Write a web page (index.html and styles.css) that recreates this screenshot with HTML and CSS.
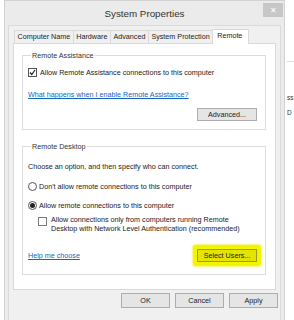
FILE: index.html
```html
<!DOCTYPE html>
<html>
<head>
<meta charset="utf-8">
<link rel="stylesheet" href="styles.css">
</head>
<body>
<div class="window">
  <div class="titlebar">
    <span></span>
    <span class="title">System Properties</span>
    <span class="close-wrap"><span class="close">&#x2715;</span></span>
  </div>
  <div class="client">
    <div class="tabs">
      <span class="tab">Computer Name</span>
      <span class="tab">Hardware</span>
      <span class="tab">Advanced</span>
      <span class="tab">System Protection</span>
      <span class="tab active">Remote</span>
    </div>
    <div class="panel">
      <fieldset class="group g1">
        <legend>Remote Assistance</legend>
        <div class="row check-row">
          <span class="checkbox checked"><svg width="7" height="7" viewBox="0 0 7 7"><path d="M1 3.5 L2.8 5.5 L6 1" fill="none" stroke="#222" stroke-width="1.2"/></svg></span>
          <span>Allow Remote Assistance connections to this computer</span>
        </div>
        <a class="link l1">What happens when I enable Remote Assistance?</a>
        <div class="btn-row"><span class="btn">Advanced...</span></div>
      </fieldset>
      <fieldset class="group g2">
        <legend>Remote Desktop</legend>
        <div class="text choose">Choose an option, and then specify who can connect.</div>
        <div class="row radio-row r1"><span class="radio"></span><span>Don't allow remote connections to this computer</span></div>
        <div class="row radio-row r2"><span class="radio on"></span><span>Allow remote connections to this computer</span></div>
        <div class="row nla"><span class="checkbox"></span><span>Allow connections only from computers running Remote Desktop with Network Level Authentication (recommended)</span></div>
        <div class="bottom-row">
          <a class="link">Help me choose</a>
          <span class="hl"><span class="btn select">Select Users...</span></span>
        </div>
      </fieldset>
    </div>
    <div class="buttons">
      <span class="btn big">OK</span>
      <span class="btn big">Cancel</span>
      <span class="btn big">Apply</span>
    </div>
  </div>
</div>
<div class="behind">
  <div class="bline"></div>
  <div class="btxt t1">ss</div>
  <div class="btxt t2">D</div>
</div>
</body>
</html>
```

FILE: styles.css
```css
html, body {
  margin: 0;
  padding: 0;
  background: #ffffff;
  height: 320px;
  overflow: hidden;
}
body {
  display: flex;
  font-family: "Liberation Sans", Arial, sans-serif;
  font-size: 7.2px;
  color: #1a1a1a;
}
.window {
  margin-left: 4px;
  width: 273px;
  height: 330px;
  background: #ebebeb;
  border: 1px solid #d2d2d2;
  padding: 0 3px;
  flex: none;
}
.titlebar {
  height: 24px;
  display: grid;
  grid-template-columns: 1fr auto 1fr;
  align-items: start;
}
.title {
  font-size: 9.8px;
  color: #333;
  padding-top: 7px;
}
.close-wrap {
  display: flex;
  justify-content: flex-end;
  padding-top: 2px;
  margin-right: -2px;
}
.close {
  width: 20px;
  height: 14px;
  background: #c7c7c7;
  color: #fff;
  font-size: 8px;
  display: flex;
  align-items: center;
  justify-content: center;
}
.client {
  background: #f0f0f0;
  border: 1px solid #dadada;
  padding: 3px 4px 0 4px;
  height: 300px;
}
.tabs {
  display: flex;
  align-items: flex-end;
  height: 14px;
  padding-left: 1px;
  position: relative;
  z-index: 1;
}
.tab {
  height: 12px;
  line-height: 12px;
  border: 1px solid #d9d9d9;
  border-bottom: none;
  border-right: none;
  background: #f0f0f0;
  padding: 0 2.5px;
  font-size: 7.2px;
  color: #222;
}
.tab.active {
  height: 14px;
  line-height: 12px;
  background: #ffffff;
  border-right: 1px solid #d9d9d9;
  padding: 0 6px 0 4px;
  margin-bottom: -1px;
}
.panel {
  background: #ffffff;
  border: 1px solid #d9d9d9;
  padding: 7px 9px 0 8px;
  box-sizing: border-box;
  height: 247px;
}
.group {
  margin: 0;
  border: 1px solid #dcdcdc;
  padding: 0 8px 0 5px;
  min-width: 0;
}
.group legend {
  padding: 0 1px;
  margin-left: 3px;
  font-size: 7.2px;
  color: #333;
  line-height: 9px;
}
.g1 { height: 79px; box-sizing: border-box; }
.g2 { margin-top: 12px; height: 133px; box-sizing: border-box; }
.row {
  display: flex;
  align-items: center;
  font-size: 7.2px;
  line-height: 9px;
}
.check-row { margin-top: 8px; gap: 3px; }
.checkbox {
  width: 8px;
  height: 8px;
  border: 1px solid #7a7a7a;
  background: #fff;
  box-sizing: border-box;
  display: flex;
  align-items: center;
  justify-content: center;
  flex: none;
}
.checkbox.checked { width: 9px; height: 9px; border-color: #555; }
.link {
  display: block;
  color: #1565c0;
  text-decoration: underline;
  font-size: 7.2px;
  line-height: 9px;
}
.l1 { margin-top: 13px; }
.btn-row { display: flex; justify-content: flex-end; margin-top: 9px; }
.btn {
  display: flex;
  align-items: center;
  justify-content: center;
  width: 60px;
  height: 13px;
  box-sizing: border-box;
  border: 1px solid #adadad;
  background: #e5e5e5;
  font-size: 7.2px;
  color: #222;
}
.text { font-size: 7.2px; line-height: 9px; }
.choose { margin-top: 11px; }
.radio-row { gap: 2px; }
.r1 { margin-top: 11px; }
.r2 { margin-top: 10px; }
.radio {
  width: 9px;
  height: 9px;
  border: 1px solid #555;
  border-radius: 50%;
  box-sizing: border-box;
  background: #fff;
  display: flex;
  align-items: center;
  justify-content: center;
  flex: none;
}
.radio.on::after {
  content: "";
  width: 5px;
  height: 5px;
  border-radius: 50%;
  background: #222;
}
.nla {
  margin-top: 6px;
  margin-left: 10px;
  align-items: flex-start;
  gap: 4px;
  width: 205px;
  line-height: 8.5px;
}
.nla .checkbox { width: 9px; height: 9px; margin-top: 1px; }
.bottom-row {
  display: flex;
  justify-content: space-between;
  align-items: center;
  margin-top: 12px;
  margin-right: -4px;
}
.hl {
  background: #f4f400;
  padding: 4px 4px;
  border-radius: 3px;
  box-shadow: 0 0 2px 1px #f7f76a;
}
.btn.select {
  background: #e4e400;
  border-color: #9a9a30;
}
.buttons {
  display: flex;
  justify-content: flex-end;
  gap: 5px;
  margin-top: 3px;
  margin-right: -2px;
}
.btn.big { width: 49px; height: 15px; }
.behind {
  position: relative;
  flex: 1;
  overflow: hidden;
}
.bline {
  position: absolute;
  top: 61px;
  left: 2px;
  width: 20px;
  height: 1px;
  background: #dddddd;
}
.btxt {
  position: absolute;
  left: 2px;
  font-size: 6.5px;
  color: #333;
}
.t1 { top: 94px; }
.t2 { top: 109px; }
```
